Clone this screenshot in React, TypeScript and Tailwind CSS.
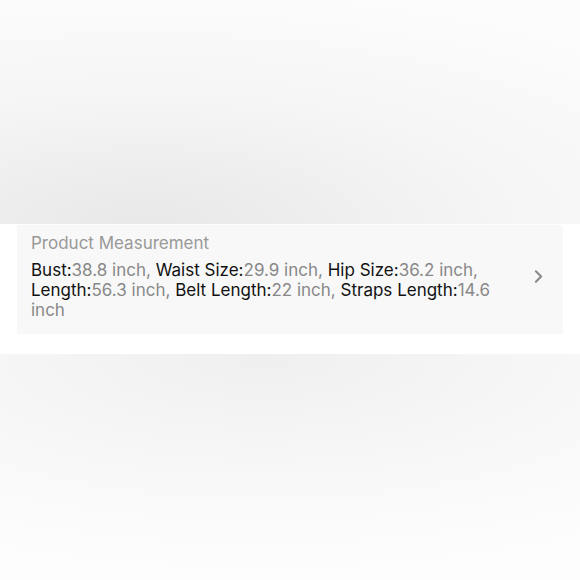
import { Fragment } from "react";
import { ChevronRight } from "lucide-react";

const items = [
    { label: "Bust:", value: "38.8 inch" },
    { label: "Waist Size:", value: "29.9 inch" },
    { label: "Hip Size:", value: "36.2 inch" },
    { label: "Length:", value: "56.3 inch" },
    { label: "Belt Length:", value: "22 inch" },
    { label: "Straps Length:", value: "14.6 inch" },
];

const App = () => {
    return (
        <div className="w-[580px] h-[580px] flex flex-col bg-white overflow-hidden font-['Inter',sans-serif]">
            <div className="h-[224px] shrink-0 bg-[radial-gradient(ellipse_120%_110%_at_25%_100%,#e8e8e8,#f6f6f6_55%,#fcfcfc)]" />
            <div className="px-[17px] pt-[1px] pb-[20px]">
                <div className="bg-[#f8f8f8] h-[109px] pl-[14px] pr-[14px] pt-[8px] flex flex-row items-start">
                    <div className="flex-1">
                        <div className="text-[17px] leading-[20px] text-[#999999]">Product Measurement</div>
                        <div className="mt-[7px] text-[17px] leading-[20px] w-[480px]">
                            {items.map((item, i) => {
                                const [num, unit] = item.value.split(" ");
                                return (
                                    <Fragment key={item.label}>
                                        <span className="text-[#111111]">{item.label}</span>
                                        <span className="text-[#888888]">{num}</span>{" "}
                                        <span className="text-[#888888]">{unit + (i < items.length - 1 ? "," : "")}</span>{" "}
                                    </Fragment>
                                );
                            })}
                        </div>
                    </div>
                    <ChevronRight className="mt-[33px] text-[#8a8a8a]" size={21} strokeWidth={2.4} />
                </div>
            </div>
            <div className="flex-1 bg-[radial-gradient(ellipse_110%_100%_at_45%_0%,#efefef,#f8f8f8_55%,#fdfdfd)]" />
        </div>
    );
};

export default App;
